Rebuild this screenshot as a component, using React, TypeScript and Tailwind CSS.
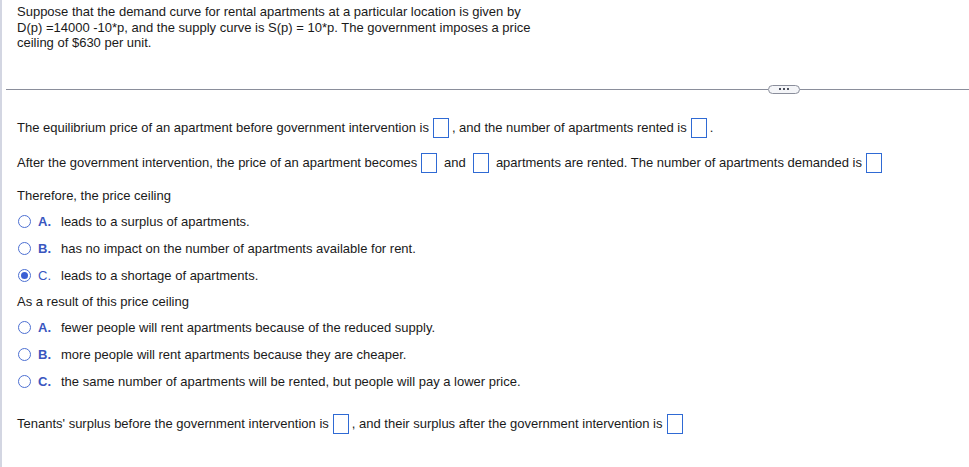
import React from "react";

function Box() {
  return <span className="inline-block ml-[4px] mr-[3px] w-[16px] h-[20px] border border-[#2f6ad4] bg-white shrink-0" />;
}

type Opt = { letter: string; text: string; checked?: boolean; bold?: boolean };

function Option({ letter, text, checked, bold = true }: Opt) {
  return (
    <div className="flex items-center h-[20px]">
      <span className="ml-[1px] w-[13px] h-[13px] rounded-full border border-[#4d70d2] flex items-center justify-center shrink-0 bg-white">
        {checked && <span className="w-[7px] h-[7px] rounded-full bg-[#3b5fd4]" />}
      </span>
      <span className={`ml-[7px] w-[23px] text-[#3a56bf] ${bold ? "font-bold" : ""}`}>{letter}</span>
      <span>{text}</span>
    </div>
  );
}

export default function App() {
  return (
    <div
      className="w-full h-[467px] bg-white border-l-2 border-[#d3d6e2] text-[13px] text-[#1a1a1a] overflow-hidden"
      style={{ fontFamily: '"Liberation Sans", Arial, sans-serif' }}
    >
      {/* Problem statement */}
      <div className="pl-[15px] pt-[4px] leading-[15.5px] w-[539px]">
        Suppose that the demand curve for rental apartments at a particular location is given by D(p) =14000 -10*p, and the supply curve is S(p) = 10*p. The government imposes a price ceiling of $630 per unit.
      </div>

      {/* Divider with expand pill */}
      <div className="mt-[34px] ml-[4px] flex items-center h-[9px]">
        <div className="flex-1 h-px bg-[#8a8e9b]" />
        <div className="w-[32px] h-[9px] rounded-full border border-[#8a8e9b] bg-[#f4f5f8] flex items-center justify-center gap-[2px]">
          <span className="w-[2px] h-[2px] bg-[#4b4f5c]" />
          <span className="w-[2px] h-[2px] bg-[#4b4f5c]" />
          <span className="w-[2px] h-[2px] bg-[#4b4f5c]" />
        </div>
        <div className="w-[169px] h-px bg-[#8a8e9b]" />
      </div>

      <div className="pl-[15px]">
        <div className="mt-[24px] flex items-center h-[20px] whitespace-pre">
          <span>The equilibrium price of an apartment before government intervention is</span>
          <Box />
          <span>, and the number of apartments rented is</span>
          <Box />
          <span>.</span>
        </div>

        <div className="mt-[15px] flex items-center h-[20px] whitespace-pre">
          <span>After the government intervention, the price of an apartment becomes</span>
          <Box />
          <span> and </span>
          <Box />
          <span> apartments are rented. The number of apartments demanded is</span>
          <Box />
        </div>

        <div className="mt-[15px] h-[16px] leading-[16px]">Therefore, the price ceiling</div>
        <div className="mt-[8px] flex flex-col gap-[7px]">
          <Option letter="A." text="leads to a surplus of apartments." />
          <Option letter="B." text="has no impact on the number of apartments available for rent." />
          <Option letter="C." text="leads to a shortage of apartments." checked bold={false} />
        </div>

        <div className="mt-[8px] h-[16px] leading-[16px]">As a result of this price ceiling</div>
        <div className="mt-[8px] flex flex-col gap-[7px]">
          <Option letter="A." text="fewer people will rent apartments because of the reduced supply." />
          <Option letter="B." text="more people will rent apartments because they are cheaper." />
          <Option letter="C." text="the same number of apartments will be rented, but people will pay a lower price." />
        </div>

        <div className="mt-[22px] flex items-center h-[20px] whitespace-pre">
          <span>Tenants' surplus before the government intervention is</span>
          <Box />
          <span>, and their surplus after the government intervention is</span>
          <Box />
        </div>
      </div>
    </div>
  );
}
